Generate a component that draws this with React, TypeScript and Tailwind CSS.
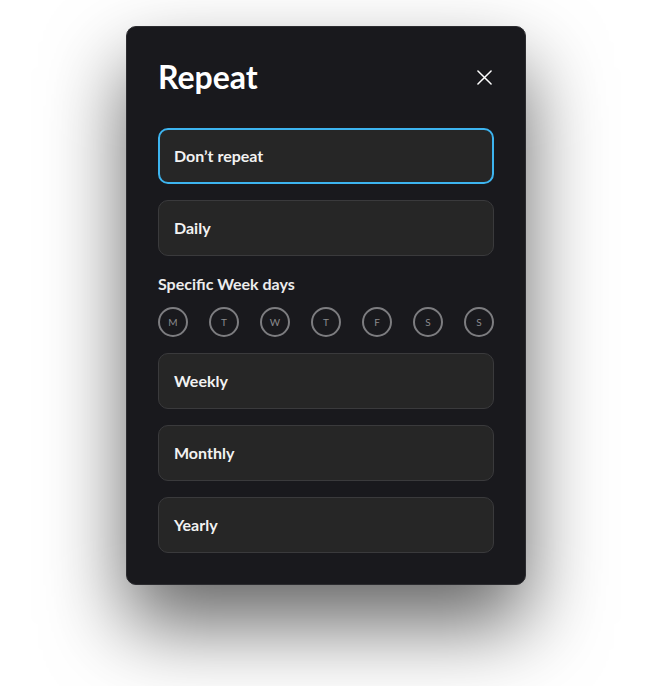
import React from "react";

const options = ["Don’t repeat", "Daily"];
const moreOptions = ["Weekly", "Monthly", "Yearly"];
const days = ["M", "T", "W", "T", "F", "S", "S"];

function Option({ label, selected }: { label: string; selected?: boolean }) {
    return (
        <button
            className={`flex h-[56px] w-full items-center rounded-[10px] bg-[#262626] text-left text-[16px] font-bold text-[#f2f2f2] ${
                selected ? "border-2 border-[#3db4ef] px-[14px]" : "border border-[#3a3a3c] px-[15px]"
            }`}
        >
            {label}
        </button>
    );
}

export default function App() {
    return (
        <div className="min-h-[686px] bg-white pt-[26px] font-['Lato','Noto_Sans',sans-serif]">
            <div className="mx-auto w-[400px] rounded-[10px] border border-[#2c2c30] bg-[#19191d] px-[31px] pb-[31px] pt-[33px] shadow-[0_40px_80px_rgba(0,0,0,0.6)]">
                {/* Header */}
                <div className="flex items-center justify-between">
                    <h1 className="text-[32px] font-bold leading-[34px] text-white">Repeat</h1>
                    <svg width="15" height="15" viewBox="0 0 16 16" className="mr-[2px] text-white">
                        <path d="M1 1L15 15M15 1L1 15" stroke="currentColor" strokeWidth="1.6" strokeLinecap="round" />
                    </svg>
                </div>

                <div className="mt-[34px] flex flex-col gap-4">
                    {options.map((o, i) => (
                        <Option key={o} label={o} selected={i === 0} />
                    ))}
                </div>

                <div className="mt-[16px] text-[16px] font-bold text-[#ececec]">Specific Week days</div>
                <div className="mt-[11px] flex justify-between">
                    {days.map((d, i) => (
                        <div
                            key={i}
                            className="flex h-[30px] w-[30px] items-center justify-center rounded-full border-2 border-[#7d7d80] text-[10px] text-[#8a8a8d]"
                        >
                            {d}
                        </div>
                    ))}
                </div>

                <div className="mt-4 flex flex-col gap-4">
                    {moreOptions.map((o) => (
                        <Option key={o} label={o} />
                    ))}
                </div>
            </div>
        </div>
    );
}
